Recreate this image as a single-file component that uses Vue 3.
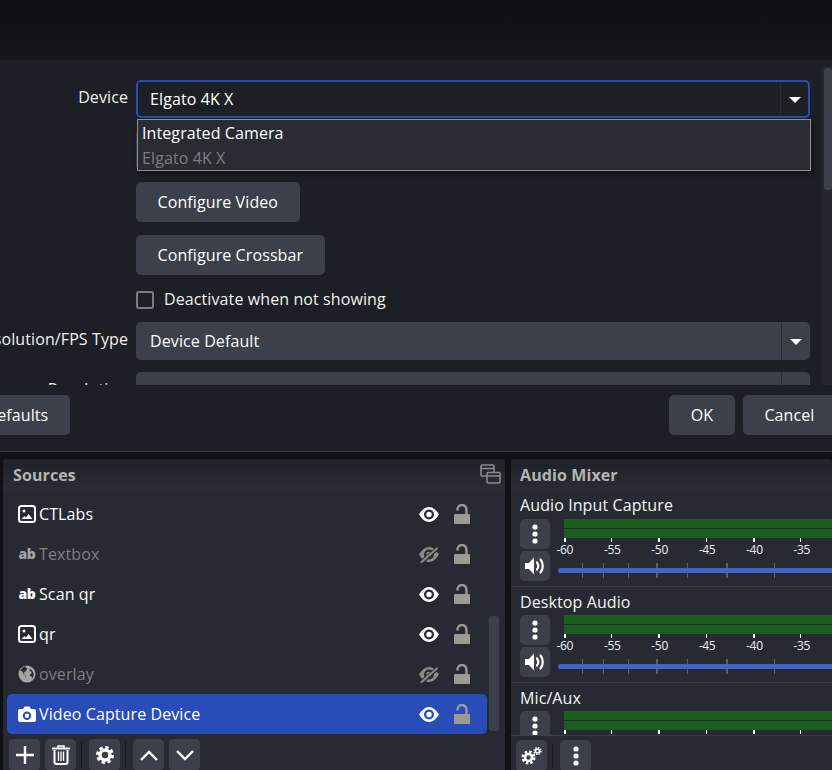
<template>
  <div class="page">
    <div class="top-band"></div>

    <section class="dialog">
      <div class="props">
        <div class="form">
          <div class="field">
            <label class="label">Device</label>
            <div class="control">
              <div class="combo focused">
                <span>Elgato 4K X</span>
                <span class="combo-arrow"><i class="caret"></i></span>
              </div>
              <ul class="popup">
                <li>Integrated Camera</li>
                <li class="current">Elgato 4K X</li>
              </ul>
            </div>
          </div>
          <div class="field">
            <span></span>
            <div class="control"><button class="btn">Deactivate</button></div>
          </div>
          <div class="field">
            <span></span>
            <div class="control"><button class="btn">Configure Video</button></div>
          </div>
          <div class="field crossbar">
            <span></span>
            <div class="control"><button class="btn">Configure Crossbar</button></div>
          </div>
          <div class="field check-row">
            <span></span>
            <label class="check"><i class="check-box"></i>Deactivate when not showing</label>
          </div>
          <div class="field">
            <label class="label">Resolution/FPS Type</label>
            <div class="control">
              <div class="combo">
                <span>Device Default</span>
                <span class="combo-arrow"><i class="caret"></i></span>
              </div>
            </div>
          </div>
          <div class="field">
            <label class="label">Resolution</label>
            <div class="control">
              <div class="combo">
                <span></span>
                <span class="combo-arrow"></span>
              </div>
            </div>
          </div>
        </div>
        <div class="dlg-scroll"><div class="dlg-thumb"></div></div>
      </div>
      <div class="dlg-footer">
        <button class="btn defaults">Defaults</button>
        <div class="dlg-actions">
          <button class="btn ok">OK</button>
          <button class="btn cancel">Cancel</button>
        </div>
      </div>
    </section>

    <div class="docks">
      <section class="dock sources">
        <header class="dock-title">
          <span>Sources</span>
          <svg class="float-icon" width="21" height="20" viewBox="0 0 21 20" fill="none" stroke="#8b8b8b" stroke-width="1.6">
            <path d="M6 12H2a1 1 0 0 1-1-1V2a1 1 0 0 1 1-1h11a1 1 0 0 1 1 1v6" />
            <path d="M1 4.5h13" />
            <rect x="7" y="8.5" width="13" height="10.5" rx="1" />
            <path d="M7 12h13" />
          </svg>
        </header>
        <div class="src-body">
          <div class="src-list">
            <div v-for="s in sources" :key="s.name" class="src-row" :class="{ off: !s.visible, selected: s.selected }">
              <span class="src-icon">
                <svg v-if="s.type === 'image'" width="18" height="18" viewBox="0 0 18 18">
                  <rect x="1" y="1" width="16" height="16" rx="2.5" fill="none" stroke="currentColor" stroke-width="2" />
                  <circle cx="6" cy="6" r="1.5" fill="currentColor" />
                  <path d="M3.5 14l3-3 1.500 1.500 2.500-3.500 4 5z" fill="currentColor" />
                </svg>
                <span v-else-if="s.type === 'text'" class="ab">ab</span>
                <svg v-else-if="s.type === 'globe'" width="20" height="20" viewBox="0 0 20 20">
                  <circle cx="10" cy="10" r="9.5" fill="currentColor" />
                  <path d="M7.500 1.500C5.500 3 3.500 4 2.500 6.500c2 .5 3 1 3.500 2.500s2 1.500 2.500 3-.5 2.500 0 4L8 11.500 5 9.500C7 9 8 7 9.500 5.500S9 3 7.500 1.500zM13.500 4.500c-1 1 -1 2 .5 2.500s1.500 2.500 0 3-1 2 .5 2.500 1 2 1 2.500c1.500-1.500 2-3.500 2-5-.5-2-2-4-4-5.500z" fill="#272a33" />
                </svg>
                <svg v-else width="18" height="16" viewBox="0 0 18 16">
                  <path fill-rule="evenodd" d="M2 3h3l1.500-2.500h5L13 3h3a2 2 0 0 1 2 2v9a2 2 0 0 1-2 2H2a2 2 0 0 1-2-2V5a2 2 0 0 1 2-2zm7 2.500a4.200 4.200 0 1 0 0 8.400 4.200 4.200 0 0 0 0-8.400zm0 2a2.200 2.200 0 1 1 0 4.400 2.200 2.200 0 0 1 0-4.400z" fill="currentColor" />
                </svg>
              </span>
              <span class="src-name">{{ s.name }}</span>
              <span class="src-eye">
                <svg v-if="s.visible" width="20" height="15" viewBox="0 0 20 15">
                  <path fill-rule="evenodd" d="M0 7.500C3 2.500 6.500 0 10 0s7 2.500 10 7.500c-3 5-6.500 7.500-10 7.500S3 12.500 0 7.500zM10 2.500a5 5 0 1 0 0 10 5 5 0 0 0 0-10z" fill="#fff" />
                  <circle cx="10" cy="7.500" r="2.700" fill="#fff" />
                </svg>
                <svg v-else width="20" height="17" viewBox="0 0 20 17">
                  <path fill-rule="evenodd" d="M0 8.500C3 3.500 6.500 1 10 1s7 2.500 10 7.500c-3 5-6.500 7.500-10 7.500S3 13.500 0 8.500zM10 3.500a5 5 0 1 0 0 10 5 5 0 0 0 0-10z" fill="#8a8a86" />
                  <circle cx="10" cy="8.500" r="2.700" fill="#8a8a86" />
                  <path d="M2 16.500L18 3" stroke="#272a33" stroke-width="4" />
                  <path d="M2.500 16L18 2.500" stroke="#8a8a86" stroke-width="2" stroke-linecap="round" />
                </svg>
              </span>
              <svg class="src-lock" width="16" height="20" viewBox="0 0 16 20">
                <path d="M3.500 6.500V5.500a4.500 4.500 0 0 1 9 0V11" fill="none" stroke="#9b9a94" stroke-width="2.400" />
                <rect y="10" width="16" height="10" rx="1" fill="#9b9a94" />
              </svg>
            </div>
          </div>
          <div class="src-scroll"><div class="src-thumb"></div></div>
        </div>
        <footer class="dock-tools">
          <button class="tool">
            <svg width="18" height="18" viewBox="0 0 18 18"><path d="M9 0v18M0 9h18" stroke="#fff" stroke-width="2.400" /></svg>
          </button>
          <button class="tool">
            <svg width="20" height="20" viewBox="0 0 20 20" fill="none" stroke="#fff">
              <path d="M1 3.500h18" stroke-width="2" />
              <path d="M7 3V1h6v2" stroke-width="1.500" />
              <path d="M3.500 5v12a2 2 0 0 0 2 2h9a2 2 0 0 0 2-2V5" stroke-width="2" />
              <path d="M7.500 6.500v9.500M10 6.500v9.500M12.500 6.500v9.500" stroke-width="1.300" />
            </svg>
          </button>
          <i class="tool-sep"></i>
          <button class="tool">
            <svg width="18" height="18" viewBox="0 0 18 18" fill="none" stroke="#fff">
              <circle cx="9" cy="9" r="5" stroke-width="3.400" />
              <circle cx="9" cy="9" r="7.500" stroke-width="3" stroke-dasharray="3.300 2.590" />
            </svg>
          </button>
          <i class="tool-sep"></i>
          <button class="tool">
            <svg width="18" height="11" viewBox="0 0 18 11"><path d="M1 10l8-8 8 8" fill="none" stroke="#fff" stroke-width="2.400" /></svg>
          </button>
          <button class="tool">
            <svg width="18" height="11" viewBox="0 0 18 11"><path d="M1 1l8 8 8-8" fill="none" stroke="#fff" stroke-width="2.400" /></svg>
          </button>
        </footer>
      </section>

      <section class="dock mixer">
        <header class="dock-title"><span>Audio Mixer</span></header>
        <div class="mix-body">
          <div v-for="ch in channels" :key="ch" class="strip">
            <div class="strip-name">{{ ch }}</div>
            <div class="strip-main">
              <div class="strip-btns">
                <button class="tool mini">
                  <svg width="6" height="20" viewBox="0 0 6 20" fill="#fff"><circle cx="3" cy="3" r="2.600" /><circle cx="3" cy="10" r="2.600" /><circle cx="3" cy="17" r="2.600" /></svg>
                </button>
                <button class="tool mini">
                  <svg width="20" height="18" viewBox="0 0 20 18" fill="none">
                    <path d="M0 6h4l5-5.500v17L4 12H0z" fill="#fff" />
                    <path d="M12 5.500c1.500 2 1.500 5 0 7" stroke="#fff" stroke-width="2.200" stroke-linecap="round" />
                    <path d="M15.500 2.500c3 3.500 3 9.500 0 13" stroke="#fff" stroke-width="2.200" stroke-linecap="round" />
                  </svg>
                </button>
              </div>
              <div class="strip-right">
                <div class="meter"><i></i><i></i></div>
                <div class="scale">
                  <div v-for="(m, i) in marks" :key="m" class="mark">
                    <i :class="{ thick: i % 2 === 0 }"></i>
                    <span>{{ m }}</span>
                  </div>
                </div>
                <div class="slider">
                  <i v-for="t in sliderTicks" :key="t.x" class="slider-tick" :class="{ thick: t.thick }" :style="{ left: t.x + 'px' }"></i>
                  <div class="slider-fill"></div>
                </div>
              </div>
            </div>
          </div>
        </div>
        <footer class="dock-tools mix-tools">
          <button class="tool">
            <svg width="21" height="18" viewBox="0 0 21 18" fill="none" stroke="#fff">
              <circle cx="7.500" cy="10.500" r="3.500" stroke-width="2.600" />
              <circle cx="7.500" cy="10.500" r="5.800" stroke-width="2.400" stroke-dasharray="2.500 2.050" />
              <circle cx="16.500" cy="4" r="2" stroke-width="1.600" />
              <circle cx="16.500" cy="4" r="3.400" stroke-width="1.400" stroke-dasharray="1.500 1.170" />
            </svg>
          </button>
          <i class="tool-sep"></i>
          <button class="tool">
            <svg width="6" height="20" viewBox="0 0 6 20" fill="#fff"><circle cx="3" cy="3" r="2.600" /><circle cx="3" cy="10" r="2.600" /><circle cx="3" cy="17" r="2.600" /></svg>
          </button>
        </footer>
      </section>
    </div>
  </div>
</template>

<script setup>
const sources = [
  { name: 'CTLabs', type: 'image', visible: true },
  { name: 'Textbox', type: 'text', visible: false },
  { name: 'Scan qr', type: 'text', visible: true },
  { name: 'qr', type: 'image', visible: true },
  { name: 'overlay', type: 'globe', visible: false },
  { name: 'Video Capture Device', type: 'camera', visible: true, selected: true }
]

const channels = ['Audio Input Capture', 'Desktop Audio', 'Mic/Aux']
const marks = ['-60', '-55', '-50', '-45', '-40', '-35', '-30']

// offsets inside the slider, which starts at x=558 in the window
const sliderTicks = [24, 45, 70, 98, 129, 168, 216, 274].map((x, i) => ({
  x,
  thick: i === 3 || i === 5
}))
</script>

<style>
html, body {
  margin: 0;
  background: #101115;
}
</style>

<style scoped>
.page {
  width: 832px;
  height: 770px;
  overflow: hidden;
  display: flex;
  flex-direction: column;
  background: #101115;
  color: #fff;
  font-family: "Open Sans", "Noto Sans", sans-serif;
  font-size: 16px;
  letter-spacing: 0.1px;
}

.top-band {
  height: 60px;
  flex: none;
  background: linear-gradient(to bottom, #0e0f12, #15171c);
}

.dialog {
  height: 391px;
  flex: none;
  background: #1d1f26;
  border-bottom: 1px solid #3a3b41;
  box-sizing: content-box;
}

.props {
  height: 325px;
  display: flex;
  overflow: hidden;
}

.form {
  width: 810px;
  flex: none;
  padding-top: 20px;
  display: flex;
  flex-direction: column;
  gap: 12px;
}

.field {
  display: grid;
  grid-template-columns: 128px 1fr;
  column-gap: 8px;
}

.crossbar {
  margin-top: 1px;
}

.check-row {
  margin-top: 4px;
  margin-bottom: 2px;
}

.label {
  display: flex;
  justify-content: flex-end;
  white-space: nowrap;
  line-height: 34px;
  color: #f0f0f0;
}

.control {
  position: relative;
  display: flex;
  min-width: 0;
}

.combo {
  flex: 1;
  height: 38px;
  box-sizing: border-box;
  display: flex;
  justify-content: space-between;
  align-items: center;
  padding-left: 14px;
  background: #3c404b;
  border-radius: 5px;
  line-height: 38px;
}

.combo.focused {
  background: #1d1f26;
  border: 2px solid #284cb8;
  padding-left: 12px;
}

.combo-arrow {
  width: 28px;
  height: 100%;
  display: flex;
  align-items: center;
  justify-content: center;
  border-left: 1px solid #2a2c34;
}

.focused .combo-arrow {
  width: 27px;
}

.caret {
  width: 0;
  height: 0;
  margin-top: 1px;
  border-left: 6px solid transparent;
  border-right: 6px solid transparent;
  border-top: 6px solid #fff;
}

.popup {
  position: absolute;
  left: 1px;
  top: 39px;
  width: 674px;
  box-sizing: border-box;
  margin: 0;
  padding: 0 3px;
  list-style: none;
  background: #2a2c34;
  border: 1px solid #8d8d92;
  box-shadow: 2px 3px 5px rgba(0, 0, 0, 0.45);
  z-index: 2;
}

.popup li {
  height: 25px;
  line-height: 27px;
  padding-left: 1px;
}

.popup .current {
  color: #7c7c7e;
}

.btn {
  height: 40px;
  padding: 0 21.500px;
  border: 0;
  border-radius: 5px;
  background: #3c404b;
  color: #fff;
  font: inherit;
  letter-spacing: inherit;
  white-space: nowrap;
}

.check {
  display: flex;
  align-items: center;
  gap: 10px;
  height: 17px;
  line-height: 17px;
  color: #f0f0f0;
}

.check-box {
  width: 14px;
  height: 14px;
  border: 2px solid #7b7c80;
  border-radius: 3px;
}

.dlg-scroll {
  margin: 6px 0 0 11px;
  width: 12px;
  padding: 2px 0 0 3px;
  background: #24262e;
  border-radius: 4px 0 0 4px;
  box-sizing: border-box;
}

.dlg-thumb {
  height: 122px;
  background: #3c404b;
  border-radius: 3px;
}

.dlg-footer {
  display: flex;
  justify-content: space-between;
  padding-top: 10px;
  margin-left: -36px;
  margin-right: -4px;
}

.dlg-actions {
  display: flex;
  gap: 8px;
}

.btn.ok {
  width: 66px;
  padding: 0;
}

.docks {
  flex: 1;
  min-height: 0;
  margin-top: 7px;
  padding-left: 3px;
  display: flex;
  gap: 6px;
}

.dock {
  display: flex;
  flex-direction: column;
  background: #272a33;
  border-radius: 4px 4px 0 0;
  overflow: hidden;
}

.sources {
  width: 502px;
  flex: none;
}

.mixer {
  flex: 1;
  min-width: 0;
}

.dock-title {
  height: 32px;
  flex: none;
  box-sizing: border-box;
  display: flex;
  align-items: center;
  justify-content: space-between;
  padding: 0 4px 0 10px;
  background: linear-gradient(to bottom, #1f2128, #2b2d36);
  font-weight: 700;
  color: #b3b3b3;
}

.mixer .dock-title {
  padding-left: 9px;
}

.float-icon {
  margin-top: -2px;
}

.src-body {
  height: 244px;
  flex: none;
  display: flex;
}

.src-list {
  width: 480px;
  flex: none;
  padding: 3px 0 0 4px;
}

.src-row {
  height: 40px;
  display: flex;
  align-items: center;
  padding-left: 11px;
  border-radius: 5px;
}

.src-row.off {
  color: #7f7f80;
}

.src-row.off .src-icon {
  color: #a4a4a4;
}

.src-row.selected {
  background: #284cb8;
}

.src-icon {
  width: 18px;
  display: flex;
  justify-content: center;
  margin-right: 3px;
}

.ab {
  font-weight: 800;
  font-size: 14px;
  line-height: 18px;
  letter-spacing: -0.4px;
}

.src-name {
  flex: 1;
}

.src-eye {
  width: 20px;
  display: flex;
  justify-content: center;
  margin-right: 15px;
}

.src-lock {
  margin-right: 17px;
}

.src-scroll {
  width: 10px;
  margin: 125px 0 4px 2px;
}

.src-thumb {
  height: 100%;
  background: #3c404b;
  border-radius: 3px;
}

.dock-tools {
  display: flex;
  align-items: flex-start;
  gap: 5px;
  padding: 4px 0 0 6px;
}

.tool {
  width: 31px;
  height: 32px;
  flex: none;
  padding: 0;
  border: 0;
  border-radius: 5px;
  background: #3c404b;
  display: flex;
  align-items: center;
  justify-content: center;
}

.tool.mini {
  width: 30px;
  height: 30px;
}

.tool-sep {
  width: 1px;
  height: 26px;
  margin: 3px 2px 0 0;
  background: #17181d;
}

.mix-body {
  height: 244px;
  flex: none;
  overflow: hidden;
  border-bottom: 1px solid #3c3e48;
}

.strip {
  height: 96px;
  box-sizing: border-box;
  padding: 3px 0 0 9px;
  border-bottom: 1px solid #373943;
  overflow: hidden;
}

.strip-name {
  height: 22px;
  line-height: 22px;
  margin-bottom: 3px;
  color: #f4f4f4;
}

.strip + .strip .strip-name {
  line-height: 24px;
}

.strip-main {
  display: flex;
  gap: 8px;
}

.strip-btns {
  display: flex;
  flex-direction: column;
  gap: 2px;
}

.strip-right {
  flex: 1;
  min-width: 0;
  position: relative;
}

.meter {
  margin-left: 6px;
  display: flex;
  flex-direction: column;
  gap: 1px;
}

.meter i {
  height: 9px;
  background: #1a5e1e;
}

.scale {
  display: flex;
  margin-left: 5.500px;
  height: 18px;
}

.mark {
  width: 47.400px;
  flex: none;
  position: relative;
}

.mark i {
  display: block;
  width: 1px;
  height: 4px;
  background: #fff;
}

.mark i.thick {
  width: 2px;
}

.mark span {
  display: block;
  margin-left: -7px;
  font-size: 12px;
  line-height: 15px;
  letter-spacing: -0.3px;
  color: #f0f0f0;
}

.slider {
  position: relative;
  height: 19px;
  margin-top: 5px;
  display: flex;
  align-items: center;
}

.slider-fill {
  position: relative;
  width: 100%;
  height: 5px;
  border-radius: 3px 0 0 3px;
  background: #4263c9;
}

.slider-tick {
  position: absolute;
  top: 2px;
  width: 1px;
  height: 15px;
  background: #5c5f6c;
}

.slider-tick.thick {
  width: 2px;
}

.mix-tools {
  padding-left: 5px;
}
</style>
